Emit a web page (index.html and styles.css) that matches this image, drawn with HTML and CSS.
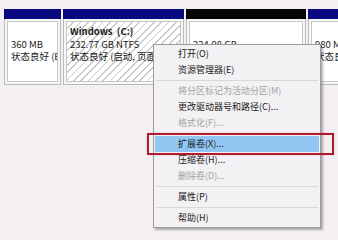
FILE: index.html
```html
<!DOCTYPE html>
<html lang="zh-CN">
<head>
    <meta charset="UTF-8">
    <title>磁盘管理</title>
    <link rel="stylesheet" href="styles.css">
</head>
<body>
    <div class="disk">
        <div class="part p1">
            <div class="bar"></div>
            <div class="box">
                <div class="cell">
                    <p>&nbsp;</p>
                    <p>360 MB</p>
                    <p>状态良好 (EFI 系统分区)</p>
                </div>
            </div>
        </div>
        <div class="part p2">
            <div class="bar"></div>
            <div class="box">
                <div class="cell hatch">
                    <p class="name">Windows&nbsp;&nbsp;(C:)</p>
                    <p>232.77 GB NTFS</p>
                    <p>状态良好 (启动, 页面文件, 故障转储, 主分区)</p>
                </div>
            </div>
        </div>
        <div class="part p3">
            <div class="bar black"></div>
            <div class="box">
                <div class="cell">
                    <p>&nbsp;</p>
                    <p>224.98 GB</p>
                    <p>未分配</p>
                </div>
            </div>
        </div>
        <div class="part p4">
            <div class="bar"></div>
            <div class="box">
                <div class="cell">
                    <p>&nbsp;</p>
                    <p>980 MB</p>
                    <p>状态良好 (恢复分区)</p>
                </div>
            </div>
        </div>
    </div>

    <!-- right-click menu -->
    <div class="menu">
        <div class="item">打开(O)</div>
        <div class="item">资源管理器(E)</div>
        <div class="sep"></div>
        <div class="item off">将分区标记为活动分区(M)</div>
        <div class="item">更改驱动器号和路径(C)...</div>
        <div class="item off">格式化(F)...</div>
        <div class="sep"></div>
        <div class="item on">扩展卷(X)...</div>
        <div class="item">压缩卷(H)...</div>
        <div class="item off">删除卷(D)...</div>
        <div class="sep"></div>
        <div class="item">属性(P)</div>
        <div class="sep"></div>
        <div class="item">帮助(H)</div>
    </div>
    <div class="mark"></div>
</body>
</html>
```

FILE: styles.css
```css
body {
    margin: 0;
    width: 338px;
    height: 240px;
    overflow: hidden;
    background-color: #f3eff2;
    font-family: "Noto Sans CJK SC", "Noto Sans", sans-serif;
    font-size: 9px;
    color: #1a1a1a;
}
.disk {
    display: flex;
    gap: 2px;
    padding: 9px 0 0 4px;
    white-space: nowrap;
}
.part {
    flex: none;
}
.p1 { width: 57px; }
.p2 { width: 121px; }
.p3 { width: 120px; }
.p4 { width: 60px; }
.bar {
    height: 10px;
    background-color: #0a0a80;
}
.bar.black {
    background-color: #050505;
}
.box {
    height: 66px;
    box-sizing: border-box;
    border: 1px solid #bcbcbc;
    border-top: none;
    padding: 2px;
    background-color: #f7f6f7;
}
.cell {
    height: 100%;
    box-sizing: border-box;
    border: 1px solid #c8c8c8;
    background-color: #fff;
    padding: 3px 3px 0;
    overflow: hidden;
}
.cell.hatch {
    background: repeating-linear-gradient(135deg, #fff 0, #fff 4px, #c9c9c9 4px, #c9c9c9 5.2px);
}
.cell p {
    margin: 0;
    line-height: 12.5px;
    font-size: 9.5px;
}
.cell .name {
    font-weight: bold;
}
/* context menu */
.menu {
    position: absolute;
    left: 153px;
    top: 44px;
    width: 164px;
    padding: 1px;
    border: 1px solid #9c9c9c;
    background-color: #f3f1f3;
    box-shadow: 2px 2px 2px rgba(0, 0, 0, 0.3);
}
.item {
    height: 16px;
    line-height: 16px;
    padding-left: 23px;
    white-space: nowrap;
}
.item.off {
    color: #a3a3a3;
}
.item.on {
    background-color: #91c6f3;
}
.sep {
    height: 1px;
    margin: 2px 1px 2px;
    background-color: #d9d7d9;
}
.mark {
    position: absolute;
    left: 147px;
    top: 133px;
    width: 187px;
    height: 22px;
    box-sizing: border-box;
    border: 2px solid #b01c2e;
    box-shadow: 0 0 1px rgba(200, 0, 0, 0.4);
}
```
